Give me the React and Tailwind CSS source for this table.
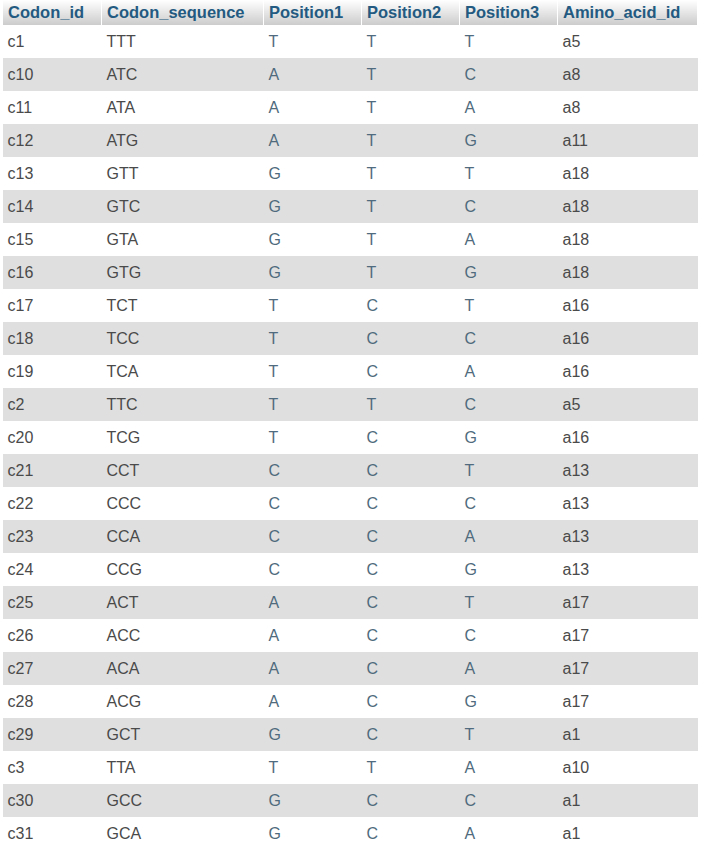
import React from "react";

const rows = [
  ["c1", "TTT", "a5"],
  ["c10", "ATC", "a8"],
  ["c11", "ATA", "a8"],
  ["c12", "ATG", "a11"],
  ["c13", "GTT", "a18"],
  ["c14", "GTC", "a18"],
  ["c15", "GTA", "a18"],
  ["c16", "GTG", "a18"],
  ["c17", "TCT", "a16"],
  ["c18", "TCC", "a16"],
  ["c19", "TCA", "a16"],
  ["c2", "TTC", "a5"],
  ["c20", "TCG", "a16"],
  ["c21", "CCT", "a13"],
  ["c22", "CCC", "a13"],
  ["c23", "CCA", "a13"],
  ["c24", "CCG", "a13"],
  ["c25", "ACT", "a17"],
  ["c26", "ACC", "a17"],
  ["c27", "ACA", "a17"],
  ["c28", "ACG", "a17"],
  ["c29", "GCT", "a1"],
  ["c3", "TTA", "a10"],
  ["c30", "GCC", "a1"],
  ["c31", "GCA", "a1"],
];

const headers = ["Codon_id", "Codon_sequence", "Position1", "Position2", "Position3", "Amino_acid_id"];
const widths = ["w-[99px]", "w-[162px]", "w-[98px]", "w-[98px]", "w-[98px]", "w-[140px]"];

export default function App() {
  return (
    <div className="bg-white min-h-[851px] pl-[2px] font-['Liberation_Sans',Arial,sans-serif]">
      <table className="border-collapse table-fixed w-[695px]">
        <thead>
          <tr className="h-[25px]">
            {headers.map((h, i) => (
              <th
                key={h}
                className={`${widths[i]} text-left font-bold text-[16.5px] leading-none text-[#235a81] px-[5px] bg-gradient-to-b from-white to-[#cccccc] border-x border-white`}
              >
                {h}
              </th>
            ))}
          </tr>
        </thead>
        <tbody>
          {rows.map(([id, seq, amino], r) => (
            <tr key={id} className={`h-[33px] text-[16px] ${r % 2 === 1 ? "bg-[#dfdfdf]" : "bg-white"}`}>
              <td className="px-[5px] text-[#4a4a4a]">{id}</td>
              <td className="px-[5px] text-[#4a4a4a]">{seq}</td>
              {seq.split("").map((ch, k) => (
                <td key={k} className="px-[5px] text-[#4f6b7d]">{ch}</td>
              ))}
              <td className="px-[5px] text-[#4a4a4a]">{amino}</td>
            </tr>
          ))}
        </tbody>
      </table>
    </div>
  );
}
